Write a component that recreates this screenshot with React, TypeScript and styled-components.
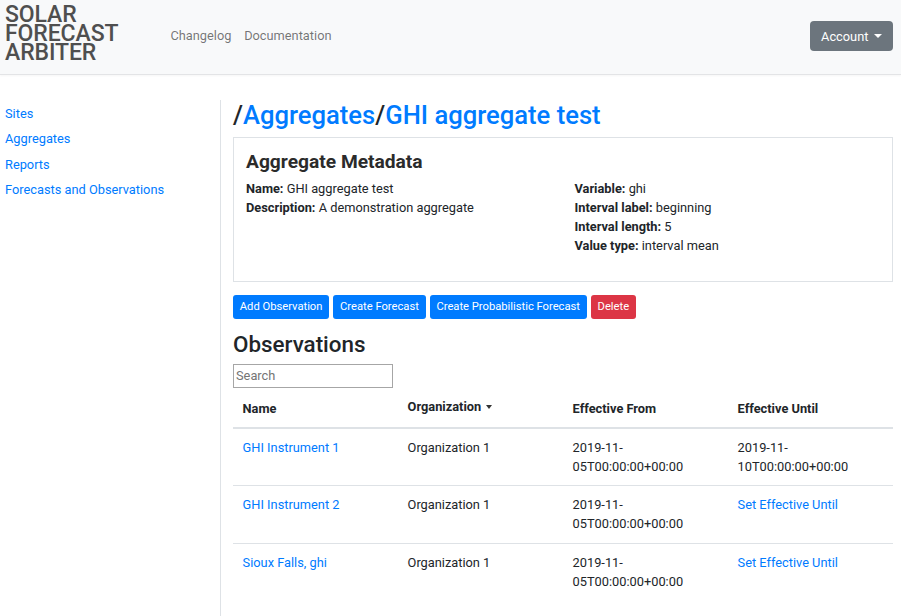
import styled, { createGlobalStyle } from "styled-components";

const GlobalStyle = createGlobalStyle`
  html, body {
    margin: 0;
    padding: 0;
  }
  body {
    font-family: Roboto, "Liberation Sans", Arial, sans-serif;
    font-size: 12.8px;
    line-height: 1.5;
    color: #212529;
    background: #fff;
  }
  * {
    box-sizing: border-box;
  }
  a {
    color: #007bff;
    text-decoration: none;
  }
`;

const observations = [
  {
    name: "GHI Instrument 1",
    org: "Organization 1",
    from: "2019-11-05T00:00:00+00:00",
    until: "2019-11-10T00:00:00+00:00",
  },
  {
    name: "GHI Instrument 2",
    org: "Organization 1",
    from: "2019-11-05T00:00:00+00:00",
    until: null,
  },
  {
    name: "Sioux Falls, ghi",
    org: "Organization 1",
    from: "2019-11-05T00:00:00+00:00",
    until: null,
  },
];

const App = () => {
  return (
    <>
      <GlobalStyle />
      <Navbar>
        <Brand>
          SOLAR
          <br />
          FORECAST
          <br />
          ARBITER
        </Brand>
        <NavLinks>
          <NavLink href="#">Changelog</NavLink>
          <NavLink href="#">Documentation</NavLink>
        </NavLinks>
        <AccountButton>
          Account <Caret />
        </AccountButton>
      </Navbar>

      <Layout>
        <Sidebar>
          <SideLink href="#">Sites</SideLink>
          <SideLink href="#">Aggregates</SideLink>
          <SideLink href="#">Reports</SideLink>
          <SideLink href="#">Forecasts and Observations</SideLink>
        </Sidebar>

        <Main>
          <Breadcrumb>
            /<a href="#">Aggregates</a>/<a href="#">GHI aggregate test</a>
          </Breadcrumb>

          <Card>
            <CardTitle>Aggregate Metadata</CardTitle>
            <MetaGrid>
              <MetaList>
                <li>
                  <b>Name:</b> GHI aggregate test
                </li>
                <li>
                  <b>Description:</b> A demonstration aggregate
                </li>
              </MetaList>
              <MetaList>
                <li>
                  <b>Variable:</b> ghi
                </li>
                <li>
                  <b>Interval label:</b> beginning
                </li>
                <li>
                  <b>Interval length:</b> 5
                </li>
                <li>
                  <b>Value type:</b> interval mean
                </li>
              </MetaList>
            </MetaGrid>
          </Card>

          <ButtonRow>
            <SmallButton>Add Observation</SmallButton>
            <SmallButton>Create Forecast</SmallButton>
            <SmallButton>Create Probabilistic Forecast</SmallButton>
            <SmallButton $danger>Delete</SmallButton>
          </ButtonRow>

          <SectionTitle>Observations</SectionTitle>
          <SearchInput placeholder="Search" />

          <Table>
            <thead>
              <tr>
                <Th>Name</Th>
                <Th $raised>
                  Organization <SortCaret />
                </Th>
                <Th>Effective From</Th>
                <Th>Effective Until</Th>
              </tr>
            </thead>
            <tbody>
              {observations.map((o) => (
                <tr key={o.name}>
                  <Td>
                    <a href="#">{o.name}</a>
                  </Td>
                  <Td>{o.org}</Td>
                  <Td>{o.from}</Td>
                  <Td>
                    {o.until ? o.until : <a href="#">Set Effective Until</a>}
                  </Td>
                </tr>
              ))}
            </tbody>
          </Table>
        </Main>
      </Layout>
    </>
  );
};

export default App;

const Navbar = styled.nav`
  display: flex;
  align-items: center;
  height: 75px;
  padding: 0 8px 0 5px;
  background: #f8f9fa;
  border-bottom: 1px solid #e3e4e6;
  box-shadow: 0 1px 2px rgba(0, 0, 0, 0.04);
`;

const Brand = styled.div`
  font-size: 23px;
  font-weight: 500;
  line-height: 19px;
  color: #4f4f4f;
  letter-spacing: -0.1px;
  margin-top: -8px;
  width: 159px;
`;

const NavLinks = styled.div`
  display: flex;
  flex: 1;
  margin-top: -2px;
`;

const NavLink = styled.a`
  && {
    color: rgba(0, 0, 0, 0.55);
  }
  padding: 0 6.4px;
`;

const AccountButton = styled.button`
  display: flex;
  align-items: center;
  gap: 6px;
  height: 30px;
  margin-top: -2px;
  padding: 0 10.6px;
  border: none;
  border-radius: 4px;
  background: #6c757d;
  color: #fff;
  font-family: inherit;
  font-size: 12.8px;
`;

const Caret = styled.span`
  display: inline-block;
  width: 0;
  height: 0;
  border-left: 4px solid transparent;
  border-right: 4px solid transparent;
  border-top: 4px solid #fff;
`;

const Layout = styled.div`
  display: flex;
  min-height: 541px;
`;

const Sidebar = styled.aside`
  display: flex;
  flex-direction: column;
  width: 221px;
  flex-shrink: 0;
  padding: 0 5px;
  margin-top: 25px;
  border-right: 1px solid #dee2e6;
`;

const SideLink = styled.a`
  padding: 3.1px 0;
  line-height: 19.2px;

  &:first-child {
    margin-top: 1px;
  }
`;

const Main = styled.main`
  flex: 1;
  padding: 25px 8px 0 12px;
  min-width: 0;
`;

const Breadcrumb = styled.h2`
  margin: 0 0 6px;
  font-size: 25.6px;
  font-weight: 500;
  line-height: 1.2;
`;

const Card = styled.div`
  border: 1px solid #dee2e6;
  padding: 12px 12px 14px;
  margin-bottom: 13px;
`;

const CardTitle = styled.h4`
  margin: 0 0 6px;
  font-size: 19.2px;
  font-weight: 700;
  line-height: 1.2;
  color: #2b2b2b;
`;

const MetaGrid = styled.div`
  display: grid;
  grid-template-columns: 1fr 1fr;
  column-gap: 23px;
  margin-bottom: 12px;
`;

const MetaList = styled.ul`
  list-style: none;
  margin: 0;
  padding: 0;
  line-height: 19px;

  b {
    font-weight: 700;
  }
`;

const ButtonRow = styled.div`
  display: flex;
  gap: 4px;
  margin-bottom: 12px;
`;

const SmallButton = styled.button<{ $danger?: boolean }>`
  height: 24px;
  padding: 0 6.8px;
  border: none;
  border-radius: 3px;
  background: ${(p) => (p.$danger ? "#dc3545" : "#007bff")};
  color: #fff;
  font-family: inherit;
  font-size: 11.2px;
`;

const SectionTitle = styled.h3`
  margin: 0 0 6px;
  font-size: 22.4px;
  font-weight: 500;
  line-height: 1.2;
`;

const SearchInput = styled.input`
  display: block;
  width: 160px;
  height: 24px;
  padding: 1px 2px;
  border: 1px solid #a6a6a6;
  font-family: inherit;
  font-size: 12.8px;
  color: #212529;

  &::placeholder {
    color: #757575;
  }
`;

const Table = styled.table`
  width: 100%;
  table-layout: fixed;
  border-collapse: collapse;
  margin-top: 2px;
`;

const Th = styled.th<{ $raised?: boolean }>`
  padding: ${(p) => (p.$raised ? "7px 9.6px 11px" : "9px 9.6px")};
  text-align: left;
  font-weight: 700;
  line-height: 19.2px;
  vertical-align: bottom;
  border-bottom: 2px solid #dee2e6;
`;

const SortCaret = styled.span`
  display: inline-block;
  width: 0;
  height: 0;
  margin-left: 2px;
  vertical-align: middle;
  border-left: 3.5px solid transparent;
  border-right: 3.5px solid transparent;
  border-top: 4px solid #333;
`;

const Td = styled.td`
  padding: 9px 9.6px;
  vertical-align: top;
  line-height: 19.2px;
  border-top: 1px solid #dee2e6;
`;
